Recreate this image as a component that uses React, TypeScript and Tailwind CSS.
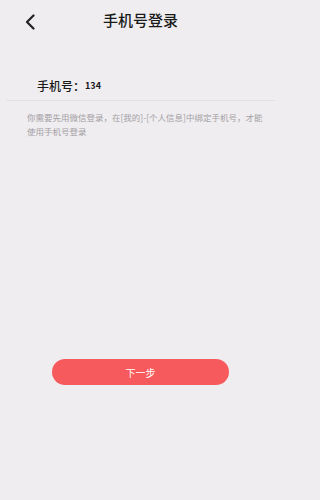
export default function App() {
  return (
    <div className="w-full min-h-[500px] bg-[#efedf0]">
      <div
        className="w-[281px] min-h-[500px] flex flex-col"
        style={{ fontFamily: '"Noto Sans CJK SC", "Noto Sans", sans-serif' }}
      >
        {/* header */}
        <div className="relative h-[40px] flex items-center justify-center">
          <button className="absolute left-[22px] top-[11px] p-[3px]">
            <svg width="10" height="16" viewBox="0 0 10 16" fill="none">
              <path d="M8.5 1.5L2 8l6.5 6.5" stroke="#222" strokeWidth="2.2" strokeLinecap="round" strokeLinejoin="round" />
            </svg>
          </button>
          <h1 className="text-[15px] leading-none font-medium text-[#1a1a1a] mt-[-2px]">手机号登录</h1>
        </div>

        {/* phone row */}
        <div className="mt-[32px] mx-[6px] h-[29px] flex items-center pl-[31px] border-b border-[#e3e1e4]">
          <span className="text-[12px] font-medium text-[#1a1a1a]">手机号：</span>
          <span className="text-[9px] font-bold text-[#1a1a1a]">134</span>
        </div>

        <p className="mt-[9px] ml-[27px] w-[240px] text-[8.5px] leading-[14px] text-[#a3a0a4]">
          你需要先用微信登录，在[我的]-[个人信息]中绑定手机号，才能使用手机号登录
        </p>

        <div className="mt-[221px] flex justify-center">
          <button className="w-[177px] h-[26px] rounded-full bg-[#f75a5c] text-white text-[10px] flex items-center justify-center">
            下一步
          </button>
        </div>
      </div>
    </div>
  );
}
